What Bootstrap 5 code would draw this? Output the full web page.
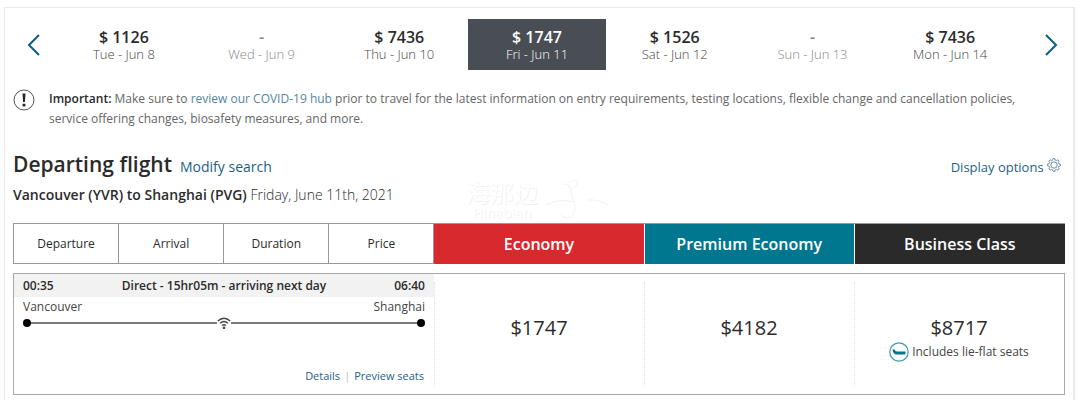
<!DOCTYPE html>
<html lang="en">
<head>
<meta charset="utf-8">
<meta name="viewport" content="width=device-width, initial-scale=1">
<title>Departing flight</title>
<link href="https://cdn.jsdelivr.net/npm/bootstrap@5.3.0/dist/css/bootstrap.min.css" rel="stylesheet">
<style>
  body { font-family: "Open Sans", "Noto Sans CJK SC", sans-serif; color: #2b2b2b; background: #fff; font-size: 13px; line-height: 20px; }
  a { color: #1d5f86; text-decoration: none; }
  button { color: inherit; }
  .results { margin: 7px 5px 0 4px; padding: 11px 8px 0; border: 1px solid #e9e9e9; border-width: 1px 2px 0 1px; min-height: calc(100vh - 7px); }
  .arrow { flex: 0 0 42px; padding: 0; border: 0; background: none; }
  .arrow.next { flex-basis: 46px; padding-left: 18px; }
  .arrow svg { display: block; margin: auto; fill: none; stroke: #0f5c86; stroke-width: 2; }
  .day { flex: 1 1 0; height: 51px; padding: 2px 0 0; border: 0; background: none; line-height: 17px; font-size: 13px; font-weight: 300; color: #444; }
  .day strong { display: block; font-size: 16px; line-height: 18px; font-weight: 600; color: #2b2b2b; }
  .day.unavailable, .day.unavailable strong { color: #888; }
  .day.selected, .day.selected strong { color: #fff; }
  .day.selected { background: #494e55; }
  .notice { margin-top: 19px; font-size: 12px; color: #666; gap: 14px; }
  .notice p { padding-right: 30px; }
  .notice .semi { color: #2b2b2b; }
  .notice a { color: #5585a0; }
  .semi { font-weight: 600; }
  .title { font-size: 21px; line-height: 30px; font-weight: 600; }
  .modify { font-size: 14px; }
  .route { font-size: 14px; line-height: 20px; font-weight: 300; margin-top: 6px; }
  .columns { display: grid; grid-template-columns: repeat(4, 1fr) repeat(3, 2fr); margin-top: 18px; height: 41px; border: 1px solid #999; border-right: 0; }
  .columns button { border: 0; border-right: 1px solid #999; background: #fff; font-size: 12px; padding: 0; }
  .columns .cabin { color: #fff; font-size: 16px; font-weight: 600; margin: 0 0 -1px; border-color: #fff; }
  .columns .economy { background: #d8292f; }
  .columns .premium { background: #00778f; }
  .columns .business { background: #2a2a2a; border: 0; }
  .flight { display: grid; grid-template-columns: 4fr repeat(3, 2fr); margin-top: 9px; height: 122px; border: 1px solid #a9a9a9; }
  .flight .times { background: #f2f2f2; height: 23px; padding: 2px 9px 0; font-size: 12px; }
  .places { padding: 0 9px; font-size: 12px; font-weight: 400; color: #444; }
  .leg { margin: 0 9px; height: 12px; }
  .leg i { width: 8px; height: 8px; border-radius: 50%; background: #000; }
  .leg span { flex: 1; height: 2px; background: #7b7b7b; }
  .links { font-size: 11px; padding: 0 10px 8px; }
  .fare { display: flex; flex-direction: column; align-items: center; position: relative; border: 0; background: none; padding: 40px 0 0; font-size: 20px; line-height: 28px; }
  .fare::before { content: ""; position: absolute; left: 0; top: 8px; bottom: 8px; border-left: 1px dotted #ddd; }
  .perk { font-size: 12px; line-height: 20px; color: #444; gap: 3px; }
  .watermark { position: absolute; left: 466px; top: 180px; color: #fff; text-shadow: 1px 1px 0 #f2f2f2; pointer-events: none; }
  .watermark div { text-align: center; font-size: 14px; line-height: 14px; }
  .watermark .han { font-size: 24px; line-height: 26px; }
  .watermark svg { margin-left: 8px; fill: none; stroke: #f2f2f2; }
</style>
</head>
<body>
<main class="results">
  <nav class="d-flex align-items-center" aria-label="Nearby dates">
    <button class="arrow" aria-label="Earlier dates"><svg width="14" height="22" viewBox="0 0 14 22"><path d="M12 1 2 11l10 10"/></svg></button>
    <button class="day"><strong>$ 1126</strong>Tue - Jun 8</button>
    <button class="day unavailable"><strong>-</strong>Wed - Jun 9</button>
    <button class="day"><strong>$ 7436</strong>Thu - Jun 10</button>
    <button class="day selected"><strong>$ 1747</strong>Fri - Jun 11</button>
    <button class="day"><strong>$ 1526</strong>Sat - Jun 12</button>
    <button class="day unavailable"><strong>-</strong>Sun - Jun 13</button>
    <button class="day"><strong>$ 7436</strong>Mon - Jun 14</button>
    <button class="arrow next" aria-label="Later dates"><svg width="14" height="22" viewBox="0 0 14 22"><path d="m2 1 10 10L2 21"/></svg></button>
  </nav>

  <div class="notice d-flex align-items-start">
    <svg class="flex-shrink-0" width="22" height="22" viewBox="0 0 22 22"><circle cx="11" cy="11" r="10" fill="none" stroke="#555"/><path d="M9.500 4.500h3l-.6 8.500h-1.800z" fill="#222"/><circle cx="11" cy="16" r="1.600" fill="#222"/></svg>
    <p class="m-0"><span class="semi">Important:</span> Make sure to <a href="#">review our COVID-19 hub</a> prior to travel for the latest information on entry requirements, testing locations, flexible change and cancellation policies, service offering changes, biosafety measures, and more.</p>
  </div>

  <div class="d-flex align-items-baseline justify-content-between mt-3 pt-1">
    <div class="d-flex align-items-baseline gap-2">
      <h1 class="title m-0">Departing flight</h1>
      <a href="#" class="modify">Modify search</a>
    </div>
    <a href="#" class="options me-1">Display options
      <svg class="align-text-top" width="14" height="14" viewBox="0 0 14 14" fill="none" stroke="#6f8ea3"><circle cx="7" cy="7" r="3.200"/><path d="M5.700 2.200 6.100.6h1.800l.4 1.600 1.200.5 1.400-.9 1.300 1.300-.9 1.400.5 1.200 1.600.4v1.800l-1.600.4-.5 1.200.9 1.400-1.300 1.300-1.400-.9-1.200.5-.4 1.600H6.100l-.4-1.600-1.200-.5-1.400.9-1.300-1.300.9-1.400-.5-1.200L.6 7.900V6.100l1.600-.4.500-1.200-.9-1.400 1.300-1.300 1.400.9Z"/></svg></a>
  </div>
  <p class="route mb-0"><span class="semi">Vancouver (YVR) to Shanghai (PVG)</span> Friday, June 11th, 2021</p>

  <div class="columns">
    <button>Departure</button><button>Arrival</button><button>Duration</button><button>Price</button>
    <button class="cabin economy">Economy</button>
    <button class="cabin premium">Premium Economy</button>
    <button class="cabin business">Business Class</button>
  </div>

  <section class="flight">
    <div class="d-flex flex-column">
      <div class="times d-flex justify-content-between semi"><span>00:35</span><span>Direct - 15hr05m - arriving next day</span><span>06:40</span></div>
      <div class="places d-flex justify-content-between"><span>Vancouver</span><span>Shanghai</span></div>
      <div class="leg d-flex align-items-center"><i></i><span></span>
        <svg width="14" height="12" viewBox="0 0 14 12" fill="none" stroke="#444" stroke-width="1.400"><path d="M.8 4Q7-1.500 13.200 4M3 6.300q4-3.400 8 0M5 8.500q2-1.600 4 0"/><circle cx="7" cy="10.800" r=".6"/></svg>
        <span></span><i></i></div>
      <div class="links mt-auto text-end"><a href="#">Details</a><span class="mx-1 text-secondary opacity-50">|</span><a href="#">Preview seats</a></div>
    </div>
    <button class="fare">$1747</button>
    <button class="fare">$4182</button>
    <button class="fare">$8717
      <span class="perk d-flex align-items-center"><svg width="20" height="20" viewBox="0 0 20 20"><circle cx="10" cy="10" r="9.200" fill="none" stroke="#3b9bb0" stroke-width="1.200"/><path d="M3.500 7.500 5.300 7.200q.8 2.200 2.600 2.400H16.400v2.800H6.500Q4 11.800 3.500 7.500Z" fill="#007790"/></svg>Includes lie-flat seats</span></button>
  </section>
</main>
<div class="watermark d-flex" aria-hidden="true">
  <div><div class="han">海那边</div><div>Hinabian</div></div>
  <svg width="66" height="42" viewBox="0 0 66 42"><path d="M0 25Q13 18 28 22Q31 30 26 34M17 4q6-1 8 6 0 7 3 12M23 3q3-5 8-1 2 4-3 5M42 20q12-1 21 6M15 35q6 6 13 0"/></svg>
</div>
<script src="https://cdn.jsdelivr.net/npm/bootstrap@5.3.0/dist/js/bootstrap.bundle.min.js"></script>
</body>
</html>
